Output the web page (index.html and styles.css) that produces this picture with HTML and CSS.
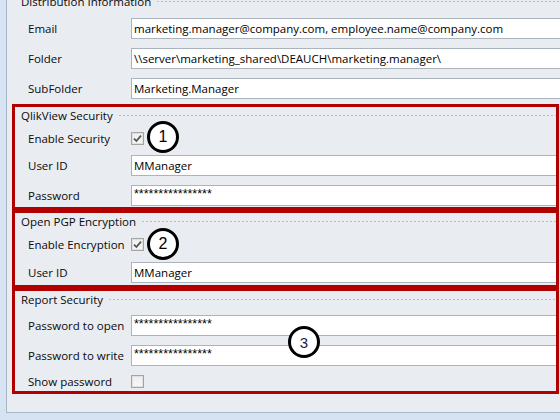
FILE: index.html
```html
<!DOCTYPE html>
<html>
<head>
<meta charset="utf-8">
<link rel="stylesheet" href="styles.css">
</head>
<body>
<div class="panel">
  <section class="group plain">
    <div class="legend"><span>Distribution Information</span></div>
    <div class="field first"><label>Email</label><div class="input">marketing.manager@company.com, employee.name@company.com</div></div>
    <div class="field"><label>Folder</label><div class="input">\\server\marketing_shared\DEAUCH\marketing.manager\</div></div>
    <div class="field"><label>SubFolder</label><div class="input">Marketing.Manager</div></div>
  </section>

  <section class="group boxed b1">
    <div class="legend"><span>QlikView Security</span></div>
    <div class="check"><label>Enable Security</label><span class="cb checked"><svg width="9" height="9" viewBox="0 0 9 9"><path d="M1 4.6 L3.4 7 L8 1.6" fill="none" stroke="#555" stroke-width="1.8"/></svg></span></div>
    <div class="field"><label>User ID</label><div class="input">MManager</div></div>
    <div class="field"><label>Password</label><div class="input pw">****************</div></div>
    <span class="callout c1">1</span>
  </section>

  <section class="group boxed b2">
    <div class="legend"><span>Open PGP Encryption</span></div>
    <div class="check"><label>Enable Encryption</label><span class="cb checked"><svg width="9" height="9" viewBox="0 0 9 9"><path d="M1 4.6 L3.4 7 L8 1.6" fill="none" stroke="#555" stroke-width="1.8"/></svg></span></div>
    <div class="field"><label>User ID</label><div class="input">MManager</div></div>
    <span class="callout c2">2</span>
  </section>

  <section class="group boxed b3">
    <div class="legend"><span>Report Security</span></div>
    <div class="field first"><label>Password to open</label><div class="input pw">****************</div></div>
    <div class="field"><label>Password to write</label><div class="input pw">****************</div></div>
    <div class="check show"><label>Show password</label><span class="cb"></span></div>
    <span class="callout c3">3</span>
  </section>
</div>
</body>
</html>
```

FILE: styles.css
```css
html, body {
  margin: 0;
  padding: 0;
}
body {
  width: 560px;
  height: 420px;
  overflow: hidden;
  background: #d5e3f2;
  font-family: "Open Sans", "Noto Sans", sans-serif;
  font-size: 11.5px;
  color: #0a0a0a;
}
.panel {
  margin-left: 6px;
  height: 412px;
  background: #e9ecf1;
  border-left: 1px solid #a8b6c5;
  border-bottom: 1px solid #a8b6c5;
  display: flex;
  flex-direction: column;
}
.group {
  display: flex;
  flex-direction: column;
}
.plain {
  margin-top: -7px;
  padding-left: 14px;
}
.plain .field,
.plain .check {
  padding-left: 7px;
}
.boxed {
  position: relative;
  margin: 0 1px 0 5px;
  border: 3px solid #b10000;
  padding: 0 0 1px 6px;
}
.boxed .field,
.boxed .check {
  padding-left: 7px;
}
.b1 { margin-top: 5px; }
.b2 { padding-bottom: 2px; }
.legend {
  height: 17px;
  display: flex;
  align-items: center;
  gap: 6px;
  white-space: nowrap;
}
.legend::after {
  content: "";
  flex: 1;
  height: 1px;
  background: repeating-linear-gradient(to right, #b7bcc3 0 2px, transparent 2px 4px);
}
.field {
  display: flex;
  align-items: center;
  height: 21px;
  margin-top: 9px;
}
.field.first { margin-top: 8px; }
.b3 .field.first { margin-top: 7px; }
.b1 .check + .field { margin-top: 3px; }
.b2 .check + .field { margin-top: 4px; }
label {
  width: 103px;
  flex: none;
  white-space: nowrap;
}
.input {
  flex: 1;
  height: 21px;
  box-sizing: border-box;
  background: #fff;
  border: 1px solid #abb3bd;
  border-right: none;
  padding-left: 2px;
  line-height: 19px;
  white-space: nowrap;
  overflow: hidden;
  color: #000;
}
.input.pw {
  font-family: "Liberation Sans", Arial, sans-serif;
  font-size: 12.5px;
  line-height: 17px;
}
.check {
  display: flex;
  align-items: center;
  height: 28px;
}
.check.show {
  height: 18px;
  margin-top: 6px;
}
.cb {
  width: 13px;
  height: 13px;
  box-sizing: border-box;
  border: 1px solid #a4a4a4;
  background: linear-gradient(#eeeeee, #f8f8f8);
  box-shadow: inset 0 0 0 1px #e0e0e0;
  display: flex;
  align-items: center;
  justify-content: center;
}
.callout {
  position: absolute;
  width: 32px;
  height: 32px;
  box-sizing: border-box;
  border: 3px solid #000;
  border-radius: 50%;
  background: #fff;
  display: flex;
  align-items: center;
  justify-content: center;
  font-family: "Liberation Sans", Arial, sans-serif;
  font-size: 16px;
  color: #000;
}
.c1 { left: 132px; top: 14px; }
.c2 { left: 132px; top: 15px; }
.c3 { left: 273px; top: 35px; color: #1c1c4c; font-size: 15px; }
```
